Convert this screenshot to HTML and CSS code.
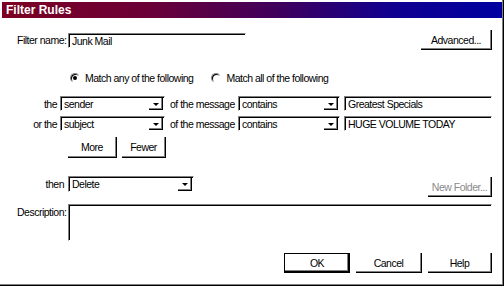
FILE: index.html
```html
<!DOCTYPE html>
<html>
<head>
<meta charset="utf-8">
<title>Filter Rules</title>
<link rel="stylesheet" href="styles.css">
</head>
<body>
<div class="win">
  <div class="titlebar"><span class="title">Filter Rules</span></div>
  <div class="content">
    <div class="row row-name">
      <span class="lbl lbl-name">Filter name:</span>
      <div class="field f-name">Junk Mail</div>
      <div class="spacer"></div>
      <div class="btn b-adv">Advanced...</div>
    </div>

    <div class="row row-radio">
      <span class="radio on"><span class="dot"></span></span>
      <span class="rtext">Match any of the following</span>
      <span class="radio r2"></span>
      <span class="rtext">Match all of the following</span>
    </div>

    <div class="row row-crit first">
      <span class="lbl lbl-crit">the</span>
      <div class="combo c-what"><span class="ctext">sender</span><span class="arrow"></span></div>
      <span class="mid">of the message</span>
      <div class="combo c-op"><span class="ctext">contains</span><span class="arrow"></span></div>
      <div class="field f-val">Greatest Specials</div>
    </div>

    <div class="row row-crit second">
      <span class="lbl lbl-crit">or the</span>
      <div class="combo c-what"><span class="ctext">subject</span><span class="arrow"></span></div>
      <span class="mid">of the message</span>
      <div class="combo c-op"><span class="ctext">contains</span><span class="arrow"></span></div>
      <div class="field f-val">HUGE VOLUME TODAY</div>
    </div>

    <div class="row row-morefewer">
      <div class="btn b-more">More</div>
      <div class="btn b-fewer">Fewer</div>
    </div>

    <div class="row row-then">
      <span class="lbl lbl-then">then</span>
      <div class="combo c-action"><span class="ctext">Delete</span><span class="arrow"></span></div>
      <div class="spacer"></div>
      <div class="btn b-newfolder disabled">New Folder...</div>
    </div>

    <div class="row row-desc">
      <span class="lbl lbl-desc">Description:</span>
      <div class="field f-desc"></div>
    </div>

    <div class="row row-actions">
      <div class="btn b-ok default">OK</div>
      <div class="btn b-cancel">Cancel</div>
      <div class="btn b-help">Help</div>
    </div>
  </div>
</div>
</body>
</html>
```

FILE: styles.css
```css
* { box-sizing: border-box; }
html, body { margin: 0; padding: 0; background: #ffffff; }
body {
  font-family: "Liberation Sans", Arial, sans-serif;
  font-size: 10.5px;
  letter-spacing: -0.5px;
  color: #000;
}
.win {
  width: 504px;
  height: 286px;
  padding: 2px 0 0 2px;
  border-right: 1px solid #000;
  border-bottom: 1px solid #000;
  box-shadow: inset -1px -1px 0 #808080;
  background: #fff;
  overflow: hidden;
}
.titlebar {
  height: 16px;
  margin-right: 1px;
  background: linear-gradient(90deg, #7c0022 0%, #6a0038 30%, #40005c 55%, #100090 78%, #0000a0 100%);
  display: flex;
  align-items: center;
  padding-left: 4px;
}
.title {
  color: #fff;
  font-weight: bold;
  font-size: 12px;
  letter-spacing: 0;
}
.content {
  padding: 12px 11px 0 15px;
}
.row { display: flex; align-items: center; white-space: nowrap; }
.spacer { flex: 1; }
.lbl { white-space: nowrap; }

/* sunken field */
.field, .combo {
  background: #fff;
  border-top: 1px solid #808080;
  border-left: 1px solid #808080;
  border-right: 1px solid #fff;
  border-bottom: 1px solid #fff;
  box-shadow: inset 1px 1px 0 #000;
  padding: 1px 0 0 3px;
  white-space: nowrap;
  overflow: hidden;
}
.combo {
  display: flex;
  align-items: center;
}
.ctext { flex: 1; }
.arrow {
  width: 14px;
  align-self: stretch;
  border-right: 1px solid #000;
  border-bottom: 1px solid #000;
  box-shadow: inset -1px -1px 0 #808080;
  display: flex;
  align-items: center;
  justify-content: center;
  margin: 1px 1px 0 0;
}
.arrow::after {
  content: "";
  display: block;
  width: 0;
  height: 0;
  border-left: 3px solid transparent;
  border-right: 3px solid transparent;
  border-top: 3px solid #000;
  margin-top: 1px;
}

/* raised button */
.btn {
  display: flex;
  align-items: center;
  justify-content: center;
  height: 20px;
  border-right: 1px solid #000;
  border-bottom: 1px solid #000;
  box-shadow: inset -1px -1px 0 #808080;
  background: #fff;
  white-space: nowrap;
}
.btn.default {
  border: 1px solid #000;
  box-shadow: inset -1px -1px 0 #000, inset -2px -2px 0 #808080;
}
.btn.disabled { color: #8a8a8a; }

/* row 1 */
.row-name { height: 20px; }
.lbl-name { width: 51px; }
.f-name { width: 178px; height: 15px; }
.b-adv { width: 71px; }

/* radios */
.row-radio { margin-top: 20px; height: 16px; padding-left: 53px; }
.radio {
  width: 10px;
  height: 10px;
  border-radius: 50%;
  border-top: 1px solid #808080;
  border-left: 1px solid #808080;
  border-right: 1px solid transparent;
  border-bottom: 1px solid transparent;
  box-shadow: inset 1px 1px 0 #000;
  display: flex;
  align-items: center;
  justify-content: center;
  margin-right: 5px;
}
.radio .dot { width: 4px; height: 4px; border-radius: 50%; background: #000; }
.r2 { margin-left: 18px; }

/* criteria rows */
.row-crit { height: 15px; }
.row-crit.first { margin-top: 10px; }
.row-crit.second { margin-top: 5px; }
.lbl-crit { width: 43px; text-align: right; padding-right: 3px; }
.combo { height: 15px; padding-top: 0; }
.c-what { width: 105px; }
.mid { width: 73px; padding-left: 5px; }
.c-op { width: 102px; }
.f-val { flex: 1; height: 15px; margin-left: 4px; }

/* more/fewer */
.row-morefewer { margin-top: 6px; padding-left: 51px; }
.b-more { width: 49px; height: 21px; }
.b-fewer { width: 44px; height: 21px; margin-left: 5px; }

/* then */
.row-then { margin-top: 18px; height: 21px; align-items: flex-start; }
.lbl-then { width: 51px; text-align: right; padding-right: 4px; line-height: 16px; }
.c-action { width: 126px; height: 16px; }
.b-newfolder { width: 64px; margin-top: 1px; }

/* description */
.row-desc { margin-top: 7px; align-items: flex-start; }
.lbl-desc { width: 51px; padding-top: 2px; }
.f-desc { flex: 1; height: 37px; }

/* actions */
.row-actions { margin-top: 12px; justify-content: flex-end; gap: 6px; }
.b-ok { width: 66px; }
.b-cancel { width: 66px; }
.b-help { width: 64px; }
```
